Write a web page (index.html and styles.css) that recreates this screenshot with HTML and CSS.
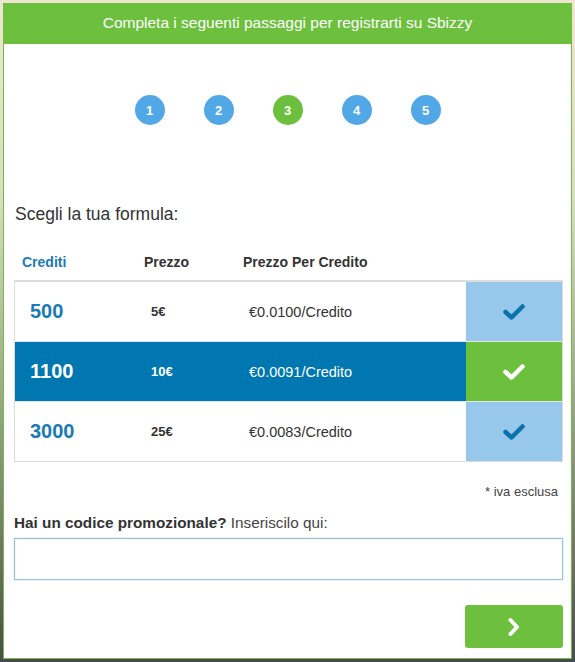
FILE: index.html
```html
<!DOCTYPE html>
<html lang="it">
<head>
<meta charset="utf-8">
<link rel="stylesheet" href="styles.css">
</head>
<body>
<div class="modal">
  <div class="header">Completa i seguenti passaggi per registrarti su Sbizzy</div>
  <div class="content">
    <div class="steps">
      <span class="step">1</span>
      <span class="step">2</span>
      <span class="step active">3</span>
      <span class="step">4</span>
      <span class="step">5</span>
    </div>
    <h2 class="title">Scegli la tua formula:</h2>
    <div class="thead">
      <span class="th th-credits">Crediti</span>
      <span class="th th-price">Prezzo</span>
      <span class="th th-ppc">Prezzo Per Credito</span>
    </div>
    <div class="table">
      <div class="row">
        <span class="credits">500</span>
        <span class="price">5€</span>
        <span class="ppc">€0.0100/Credito</span>
        <span class="check"><svg width="24" height="18" viewBox="0 0 24 18"><path d="M3.5 9 L9.5 14.5 L20.5 3.5" fill="none" stroke="currentColor" stroke-width="4.5" stroke-linecap="round" stroke-linejoin="round"/></svg></span>
      </div>
      <div class="row selected">
        <span class="credits">1100</span>
        <span class="price">10€</span>
        <span class="ppc">€0.0091/Credito</span>
        <span class="check"><svg width="24" height="18" viewBox="0 0 24 18"><path d="M3.5 9 L9.5 14.5 L20.5 3.5" fill="none" stroke="currentColor" stroke-width="4.5" stroke-linecap="round" stroke-linejoin="round"/></svg></span>
      </div>
      <div class="row">
        <span class="credits">3000</span>
        <span class="price">25€</span>
        <span class="ppc">€0.0083/Credito</span>
        <span class="check"><svg width="24" height="18" viewBox="0 0 24 18"><path d="M3.5 9 L9.5 14.5 L20.5 3.5" fill="none" stroke="currentColor" stroke-width="4.5" stroke-linecap="round" stroke-linejoin="round"/></svg></span>
      </div>
    </div>
    <div class="note">* iva esclusa</div>
    <label class="promo-label"><strong>Hai un codice promozionale?</strong> Inseriscilo qui:</label>
    <input class="promo-input" type="text">
    <div class="actions">
      <button class="next"><svg width="14" height="20" viewBox="0 0 14 20"><path d="M3.5 3 L10 10 L3.5 17" fill="none" stroke="#fff" stroke-width="4" stroke-linecap="round" stroke-linejoin="round"/></svg></button>
    </div>
  </div>
</div>
</body>
</html>
```
FILE: styles.css
```css
* { box-sizing: border-box; }
html, body { margin: 0; padding: 0; }
body {
  width: 575px;
  height: 662px;
  overflow: hidden;
  background: linear-gradient(to bottom, #efe6d2 0%, #d9dcc0 30%, #9aa888 60%, #6e7262 85%, #4a4a4e 100%);
  font-family: "Liberation Sans", Arial, sans-serif;
  color: #333;
  padding: 3px;
}
.modal {
  width: 569px;
  height: 656px;
  border: 1px solid #6cc03e;
  border-top: 0;
  background: #fff;
  display: flex;
  flex-direction: column;
}
.header {
  margin: 0 -1px;
  height: 41px;
  background: #6cc03e;
  color: #fff;
  font-size: 15.5px;
  display: flex;
  align-items: center;
  justify-content: center;
  padding-bottom: 1px;
}
.content {
  padding: 0 8px 0 10px;
  display: flex;
  flex-direction: column;
}
.steps {
  display: flex;
  justify-content: center;
  gap: 39px;
  margin-top: 51px;
  margin-left: -2px;
}
.step {
  width: 30px;
  height: 30px;
  border-radius: 50%;
  background: #52a8e6;
  color: #fff;
  font-weight: bold;
  font-size: 13px;
  display: flex;
  align-items: center;
  justify-content: center;
}
.step.active { background: #6cc03e; }
.title {
  margin: 79px 0 0 1px;
  font-size: 17.5px;
  font-weight: normal;
  color: #333;
  line-height: 20px;
}
.thead {
  display: grid;
  grid-template-columns: 121px 98px 1fr;
  margin-top: 29px;
  height: 18px;
  align-items: center;
  font-size: 14px;
  font-weight: bold;
  color: #333;
}
.th-credits { color: #1a7ab6; padding-left: 8px; }
.th-price { padding-left: 9px; }
.th-ppc { padding-left: 10px; }
.table {
  margin-top: 9px;
  border: 1px solid #dcdcdc;
  border-top: 2px solid #dcdcdc;
}
.row {
  display: grid;
  grid-template-columns: 120px 98px 1fr 96px;
  height: 60px;
  align-items: center;
  border-top: 1px solid #e6e6e6;
}
.row:first-child { border-top: 0; height: 59px; }
.credits {
  padding-left: 15px;
  font-size: 20px;
  font-weight: bold;
  color: #1a7ab6;
}
.price {
  padding-left: 16px;
  font-size: 13px;
  font-weight: bold;
  color: #333;
}
.ppc {
  padding-left: 16px;
  font-size: 14.5px;
  color: #333;
}
.check {
  height: 100%;
  background: #98c7ec;
  color: #0a73ae;
  display: flex;
  align-items: center;
  justify-content: center;
}
.row.selected { background: #0077b0; }
.row.selected .credits,
.row.selected .price,
.row.selected .ppc { color: #fff; }
.row.selected .check { background: #6cc03e; color: #fff; }
.note {
  margin-top: 23px;
  text-align: right;
  font-size: 13px;
  color: #444;
  padding-right: 5px;
  line-height: 14px;
}
.promo-label {
  margin-top: 16px;
  font-size: 15.3px;
  color: #444;
  line-height: 16px;
}
.promo-label strong { color: #333; }
.promo-input {
  margin-top: 7px;
  height: 42px;
  width: 100%;
  border: 1px solid #8cc4ef;
  box-shadow: 0 0 2px rgba(102, 175, 233, 0.4);
  outline: none;
  font-family: inherit;
}
.actions {
  display: flex;
  justify-content: flex-end;
  margin-top: 25px;
}
.next {
  width: 98px;
  height: 43px;
  border: 0;
  border-radius: 3px;
  background: #6cc03e;
  display: flex;
  align-items: center;
  justify-content: center;
  padding: 0;
}
```
